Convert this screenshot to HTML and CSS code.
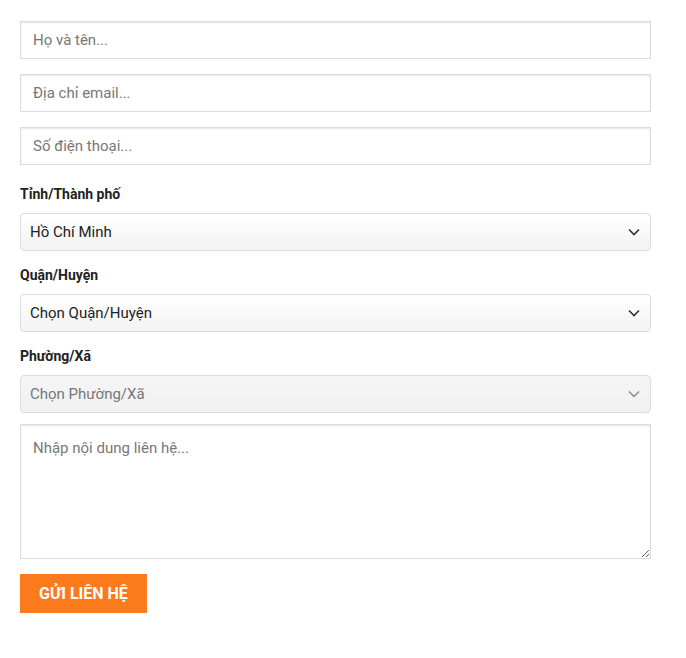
FILE: index.html
```html
<!DOCTYPE html>
<html lang="vi">
<head>
    <meta charset="UTF-8">
    <meta name="viewport" content="width=device-width, initial-scale=1.0">
    <title>Liên hệ</title>
    <link rel="stylesheet" href="styles.css">
</head>
<body>
    <form class="contact-form">
        <input type="text" class="text-input" placeholder="Họ và tên...">
        <input type="email" class="text-input" placeholder="Địa chỉ email...">
        <input type="tel" class="text-input text-input-last" placeholder="Số điện thoại...">

        <div class="select-group">
            <label for="city">Tỉnh/Thành phố</label>
            <select id="city" class="select-input">
                <option>Hồ Chí Minh</option>
            </select>
        </div>
        <div class="select-group">
            <label for="district">Quận/Huyện</label>
            <select id="district" class="select-input">
                <option>Chọn Quận/Huyện</option>
            </select>
        </div>
        <div class="select-group">
            <label for="ward">Phường/Xã</label>
            <select id="ward" class="select-input" disabled>
                <option>Chọn Phường/Xã</option>
            </select>
        </div>

        <textarea class="message-input" placeholder="Nhập nội dung liên hệ..."></textarea>
        <button type="button" class="submit-btn">Gửi liên hệ</button>
    </form>
</body>
</html>
```

FILE: styles.css
```css
body {
    margin: 0;
    padding: 21px 20px;
    font-family: Roboto, "Liberation Sans", Arial, sans-serif;
    background-color: #ffffff;
    color: #222222;
}
.contact-form {
    width: 631px;
    display: flex;
    flex-direction: column;
    align-items: flex-start;
}
.text-input,
.message-input {
    box-sizing: border-box;
    width: 100%;
    border: 1px solid #dddddd;
    box-shadow: inset 0 1px 2px rgba(0, 0, 0, 0.1); /* soft inner shadow on top */
    font-family: inherit;
    font-size: 15px;
    color: #222222;
    background-color: #ffffff;
    outline: none;
}
.text-input {
    height: 38px;
    padding: 0 12px;
    margin: 0 0 15px 0;
}
.text-input-last {
    margin-bottom: 16px;
}
::placeholder {
    color: #777777;
    opacity: 1;
}
.select-group {
    width: 100%;
    margin: 3px 0 11px 0;
}
.select-group label {
    display: block;
    font-size: 14px;
    font-weight: 700;
    line-height: 20px;
    color: #222222;
    margin-bottom: 9px;
}
.select-input {
    box-sizing: border-box;
    width: 100%;
    height: 38px;
    padding: 0 30px 0 9px;
    font-family: inherit;
    font-size: 15px;
    color: #222222;
    border: 1px solid #dddddd;
    border-radius: 4px;
    -webkit-appearance: none;
    appearance: none;
    background-color: #fafafa;
    background-image: url("data:image/svg+xml;utf8,<svg xmlns='http://www.w3.org/2000/svg' width='12' height='8' viewBox='0 0 12 8'><path d='M1 1.5l5 5 5-5' fill='none' stroke='%23333' stroke-width='1.6'/></svg>"),
        linear-gradient(#ffffff, #f3f3f3);
    background-repeat: no-repeat;
    background-position: right 10px center, 0 0;
    outline: none;
}
.select-input:disabled {
    color: #777777;
    background-color: #f3f3f3;
    background-image: url("data:image/svg+xml;utf8,<svg xmlns='http://www.w3.org/2000/svg' width='12' height='8' viewBox='0 0 12 8'><path d='M1 1.5l5 5 5-5' fill='none' stroke='%23888' stroke-width='1.4'/></svg>"),
        linear-gradient(#f5f5f5, #f1f1f1);
    opacity: 1;
}
.message-input {
    height: 135px;
    padding: 13px 12px;
    margin: 0 0 15px 0;
    line-height: 20px;
    resize: both;
}
.submit-btn {
    height: 39px;
    padding: 0 19px;
    border: none;
    background-color: #fb7a1c; /* orange */
    color: #ffffff;
    font-family: inherit;
    font-size: 16px;
    font-weight: 700;
    text-transform: uppercase;
    cursor: pointer;
}
```
